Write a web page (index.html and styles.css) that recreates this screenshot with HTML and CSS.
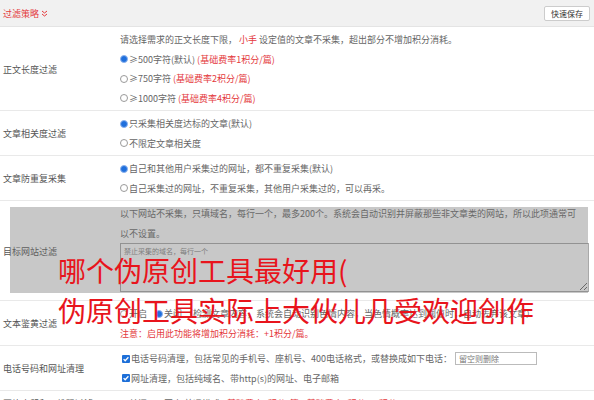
FILE: index.html
```html
<!DOCTYPE html>
<html lang="zh-CN">
<head>
<meta charset="utf-8">
<title>过滤策略</title>
<link rel="stylesheet" href="styles.css">
</head>
<body>
<div class="page">
  <div class="head">
    <div class="title">过滤策略 <svg class="chev" width="7" height="7" viewBox="0 0 7 7"><path d="M1 1l2.5 2 2.5-2M1 4l2.5 2 2.5-2" fill="none" stroke="#e4393c" stroke-width="1"/></svg></div>
    <button class="btn">快速保存</button>
  </div>

  <div class="row">
    <div class="label">正文长度过滤</div>
    <div class="cell">
      <div class="line">请选择需求的正文长度下限，&nbsp;<span class="red">小手</span>&nbsp;设定值的文章不采集，超出部分不增加积分消耗。</div>
      <div class="line"><span class="radio on"></span>≥500字符(默认)&nbsp;<span class="red">(基础费率1积分/篇)</span></div>
      <div class="line"><span class="radio"></span>≥750字符&nbsp;<span class="red">(基础费率2积分/篇)</span></div>
      <div class="line"><span class="radio"></span>≥1000字符&nbsp;<span class="red">(基础费率4积分/篇)</span></div>
    </div>
  </div>

  <div class="row">
    <div class="label">文章相关度过滤</div>
    <div class="cell">
      <div class="line"><span class="radio on"></span>只采集相关度达标的文章(默认)</div>
      <div class="line"><span class="radio"></span>不限定文章相关度</div>
    </div>
  </div>

  <div class="row">
    <div class="label">文章防重复采集</div>
    <div class="cell">
      <div class="line"><span class="radio on"></span>自己和其他用户采集过的网址，都不重复采集(默认)</div>
      <div class="line"><span class="radio"></span>自己采集过的网址，不重复采集，其他用户采集过的，可以再采。</div>
    </div>
  </div>

  <div class="row">
    <div class="label">目标网站过滤</div>
    <div class="cell">
      <div class="hint">以下网站不采集，只填域名，每行一个，最多200个。系统会自动识别并屏蔽那些非文章类的网站，所以此项通常可以不设置。</div>
      <textarea class="area" placeholder="禁止采集的域名，每行一个"></textarea>
    </div>
  </div>

  <div class="row">
    <div class="label">文本鉴黄过滤</div>
    <div class="cell">
      <div class="line"><span class="radio"></span>开启<span class="radio on gap"></span>关闭&nbsp;（检测文章内容，系统会自动识别色情内容，当色情概率达到阈值时，自动丢弃该文章）</div>
      <div class="line red">注意：启用此功能将增加积分消耗：+1积分/篇。</div>
    </div>
  </div>

  <div class="row">
    <div class="label">电话号码和网址清理</div>
    <div class="cell">
      <div class="line"><span class="check"><svg width="8" height="8" viewBox="0 0 8 8"><path d="M1.6 4.1l1.6 1.6 3.2-3.4" fill="none" stroke="#fff" stroke-width="1.3"/></svg></span>电话号码清理，包括常见的手机号、座机号、400电话格式，或替换成如下电话：<input class="phone" type="text" placeholder="留空则删除"></div>
      <div class="line"><span class="check"><svg width="8" height="8" viewBox="0 0 8 8"><path d="M1.6 4.1l1.6 1.6 3.2-3.4" fill="none" stroke="#fff" stroke-width="1.3"/></svg></span>网址清理，包括纯域名、带http(s)的网址、电子邮箱</div>
    </div>
  </div>

  <div class="row">
    <div class="label">图片水印和二维码过滤</div>
    <div class="cell">
      <div class="line"><span class="radio"></span>关闭<span class="radio on gap"></span>开启&nbsp;普通模式&nbsp;&nbsp;<span class="red">(基础费率1积分/篇)</span>&nbsp;<span class="red">(基础费率2积分)</span>&nbsp;<span class="red">(4积分)</span></div>
    </div>
  </div>

  <div class="overlay"></div>
  <div class="stamp">哪个伪原创工具最好用(<br>伪原创工具实际上大伙儿几受欢迎创作</div>
</div>
</body>
</html>
```
FILE: styles.css
```css
* { box-sizing: border-box; }

body {
  margin: 0;
  font-family: "Noto Sans CJK SC", "Noto Sans", sans-serif;
  font-size: 9px;
  color: #666;
  background: #fff;
  overflow: hidden;
}

.page {
  position: relative;
  width: 594px;
}

.head {
  height: 27px;
  background: #f1f1f1;
  border-bottom: 1px solid #e4e4e4;
  display: flex;
  align-items: center;
  justify-content: space-between;
  padding: 0 4px 0 3px;
}

.title {
  color: #e4393c;
  display: flex;
  align-items: center;
  gap: 2px;
}

.btn {
  font-family: inherit;
  font-size: 8px;
  color: #333;
  background: #fff;
  border: 1px solid #ccc;
  border-radius: 2px;
  height: 15px;
  line-height: 13px;
  padding: 0 6px;
}

.row {
  display: grid;
  grid-template-columns: 117px 1fr;
  padding: 3px 5px 2px 3px;
  border-bottom: 1px solid #e9e9e9;
}

.label {
  align-self: center;
  color: #555;
}

.line {
  height: 19.5px;
  line-height: 19.5px;
  display: flex;
  align-items: center;
  white-space: nowrap;
}

.hint {
  line-height: 19.5px;
  padding-right: 7px;
}

.red { color: #e4393c; }

.radio {
  flex: none;
  display: inline-block;
  width: 8px;
  height: 8px;
  border: 1px solid #9a9a9a;
  border-radius: 50%;
  background: #fff;
  margin-right: 1px;
}

.radio.on {
  border-color: #8db3ee;
  background: #1f6fdc;
}

.radio.gap { margin-left: 8px; }

.check {
  flex: none;
  display: inline-flex;
  width: 8px;
  height: 8px;
  border-radius: 1px;
  background: #1d6fd8;
  margin: 0 1px 0 2px;
}

.area {
  display: block;
  width: 100%;
  height: 49px;
  margin: 0 0 6px;
  border: 1px solid #a9a9a9;
  padding: 2px 3px;
  font-family: "Noto Sans CJK SC", sans-serif;
  font-size: 7px;
  color: #666;
}

.area::placeholder { color: #888; }

.phone {
  width: 82px;
  height: 13px;
  margin-left: 3px;
  border: 1px solid #bbb;
  padding: 0 3px;
  font-family: "Noto Sans CJK SC", sans-serif;
  font-size: 8px;
}

.phone::placeholder { color: #777; }

.overlay {
  position: absolute;
  left: 10px;
  top: 207px;
  width: 578px;
  height: 86px;
  background: rgba(110, 110, 110, 0.38);
}

.stamp {
  position: absolute;
  left: 58px;
  top: 250px;
  font-family: "Noto Sans CJK SC", sans-serif;
  font-size: 28px;
  line-height: 40px;
  color: #e8141c;
  white-space: nowrap;
}
```
